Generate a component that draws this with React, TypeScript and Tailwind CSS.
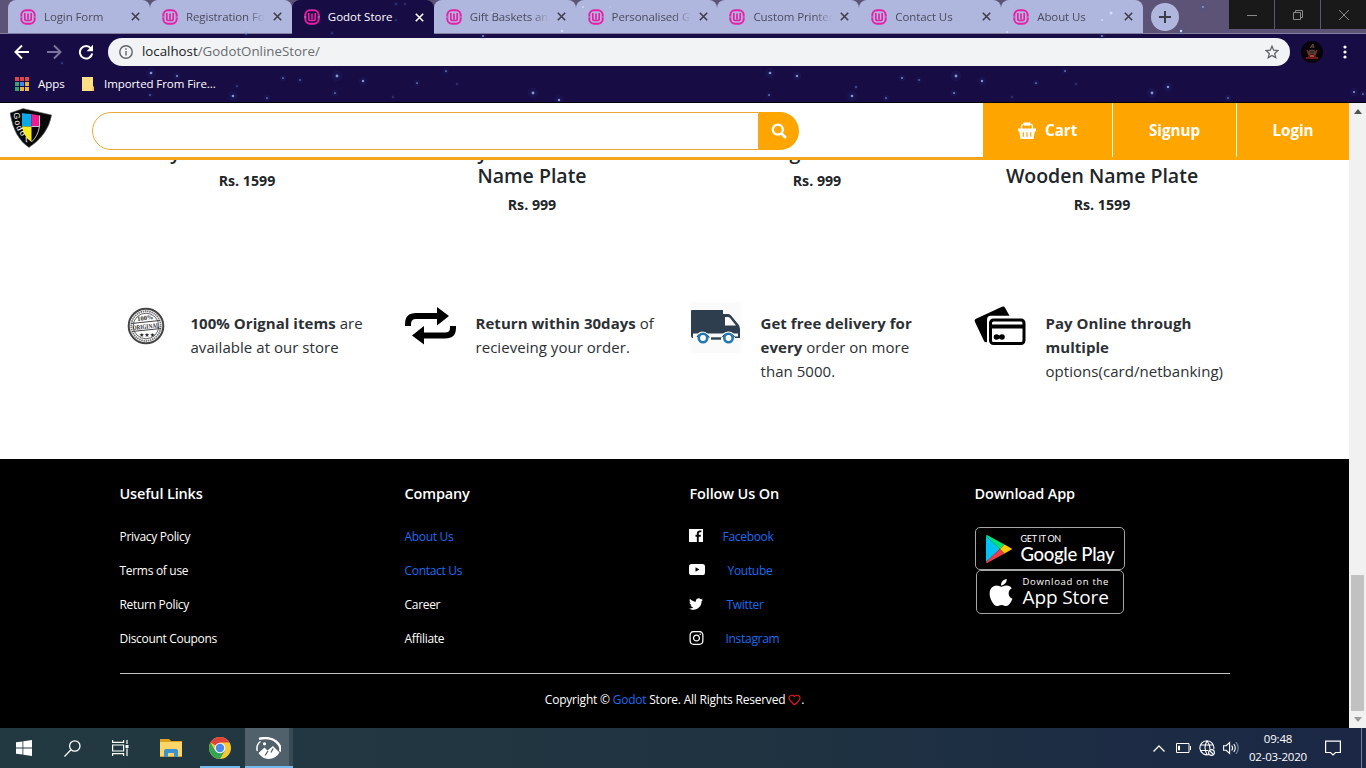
import React from "react";
import {
  FaApple,
  FaInstagram,
  FaRegHeart,
  FaTwitter,
} from "react-icons/fa";

const tabs = [
  { title: "Login Form" },
  { title: "Registration Form" },
  { title: "Godot Store", active: true },
  { title: "Gift Baskets and" },
  { title: "Personalised Gi" },
  { title: "Custom Printed" },
  { title: "Contact Us" },
  { title: "About Us" },
];

const stars: [number, number, number][] = [
  [151, 73, 1.6], [177, 76, 1.2], [150, 95, 0.9], [233, 96, 1.6], [267, 98, 1], [237, 86, 0.7],
  [283, 78, 1], [300, 80, 0.9], [337, 76, 1.7], [363, 81, 1.4], [335, 93, 1], [393, 97, 0.6],
  [417, 83, 1], [446, 71, 1], [457, 84, 0.6], [533, 93, 1.7], [559, 100, 1.5], [483, 36, 1.1],
  [770, 73, 1.6], [797, 76, 1.4], [769, 95, 1], [852, 96, 1.6], [856, 87, 0.8], [886, 98, 1],
  [902, 78, 1.1], [919, 80, 0.9], [956, 76, 1.7], [982, 81, 1.4], [954, 93, 1.1], [1012, 97, 0.6],
  [1036, 83, 1], [1065, 71, 1], [1076, 84, 0.6], [1152, 93, 1.7], [1168, 87, 1.5], [1228, 98, 1],
  [1354, 92, 1.3], [1363, 94, 1], [1102, 36, 1.1], [396, 4, 0.7], [332, 33, 0.7], [246, 34, 0.8],
  [62, 63, 0.7], [396, 20, 0.6], [405, 4, 0.6], [1203, 7, 1.1], [1181, 31, 1.4],
];

const glints: [number, number, number][] = [
  [562, 31, 1.3], [492, 13, 0.9], [583, 7, 0.9], [610, 7, 0.6], [1111, 13, 1.5], [1102, 20, 1], [1007, 32, 0.9], [1181, 31, 1.2],
];

function Favicon() {
  return (
    <svg className="h-4 w-4 shrink-0" viewBox="0 0 16 16" fill="none" stroke="#e61fa5">
      <rect x="1.3" y="1.3" width="13.4" height="13.4" rx="4.800" strokeWidth="2" />
      <path d="M4.800 4V9.700q0 1.800 1.800 1.800h2.800q1.800 0 1.800-1.800V4M8 4.500v6" strokeWidth="1.700" />
      <path d="M0 8h2.400M13.600 8H16" stroke="#b0b7df" strokeWidth=".7" />
    </svg>
  );
}

function Cross() {
  return (
    <svg className="h-[9px] w-[9px] shrink-0" viewBox="0 0 9 9" stroke="currentColor" strokeWidth="1.6">
      <path d="M.8.800l7.400 7.400M8.200.800L.800 8.200" />
    </svg>
  );
}

function TabStrip() {
  return (
    <div className="relative flex h-[34px] border-b border-[#85809f] bg-[#5c5377] pl-2">
      {tabs.map((t, i) => (
        <div
          key={t.title}
          className={
            t.active
              ? "relative -mb-px flex h-[34px] w-[141.900px] items-center rounded-t-lg bg-[#180c45] pl-3 text-white"
              : "relative flex h-[33px] w-[141.900px] items-center rounded-t-lg bg-[#b0b7df] pl-3 text-[#4a4b5c]"
          }
        >
          <Favicon />
          <div
            className={
              t.active
                ? "ml-2 w-[84px] overflow-hidden text-[11.500px] whitespace-nowrap"
                : "ml-2 w-[79px] overflow-hidden [mask-image:linear-gradient(to_right,black_78%,transparent)] text-[11.500px] tracking-[-0.1px] whitespace-nowrap"
            }
          >
            {t.title}
          </div>
          <div className={t.active ? "ml-[3px] flex text-white" : "ml-2 flex text-[#3e3e4c]"}>
            <Cross />
          </div>
          {!t.active && i !== 1 && i !== 7 && <div className="absolute top-2 -right-px h-[19px] w-px bg-[#6d6c8a]" />}
        </div>
      ))}
      <div className="mt-[3px] ml-2 flex h-7 w-7 items-center justify-center rounded-full bg-[#b0b7df]">
        <svg className="h-3 w-3" viewBox="0 0 12 12" stroke="#3d3d49" strokeWidth="2">
          <path d="M6 0v12M0 6h12" />
        </svg>
      </div>
      <div className="ml-auto flex h-[29px] gap-px">
        <div className="flex w-[45px] items-center justify-center bg-[#191919]">
          <svg className="h-2.5 w-2.5" viewBox="0 0 10 10" stroke="#8a8a8a"><path d="M0 5.500h10" /></svg>
        </div>
        <div className="flex w-[45px] items-center justify-center bg-[#191919]">
          <svg className="h-2.5 w-2.5" viewBox="0 0 10 10" stroke="#8a8a8a" fill="none">
            <path d="M.5 2.500h7v7h-7zM2.500 2.500v-2h7v7h-2" />
          </svg>
        </div>
        <div className="flex w-[45px] items-center justify-center bg-[#191919]">
          <svg className="h-2.5 w-2.5" viewBox="0 0 10 10" stroke="#8a8a8a"><path d="M0 0l10 10M10 0L0 10" /></svg>
        </div>
      </div>
    </div>
  );
}

function Toolbar() {
  return (
    <div className="flex h-[35px] items-center pl-[14px]">
      <svg className="h-4 w-4" viewBox="0 0 16 16" fill="none" stroke="#fff" strokeWidth="2">
        <path d="M15 8H2M8 1.500L1.500 8 8 14.500" />
      </svg>
      <svg className="ml-4 h-4 w-4" viewBox="0 0 16 16" fill="none" stroke="#7b759b" strokeWidth="2">
        <path d="M1 8h13M8 1.500L14.500 8 8 14.500" />
      </svg>
      <svg className="ml-4 h-4 w-4" viewBox="0 0 16 16" fill="none" stroke="#fff" strokeWidth="2">
        <path d="M13 4.500A6.200 6.200 0 1 0 14.200 9.500" />
        <path d="M15 .8v6.400H8.600z" fill="#fff" stroke="none" />
      </svg>
      <div className="ml-[14px] flex h-7 w-[1182px] items-center rounded-full bg-[#f1f3f4] pr-[11px] pl-[11px]">
        <svg className="h-[14px] w-[14px]" viewBox="0 0 14 14" fill="none" stroke="#5f6368" strokeWidth="1.400">
          <circle cx="7" cy="7" r="6.200" />
          <path d="M7 6v4.500M7 3.200v1.500" />
        </svg>
        <div className="mt-px ml-[9px] text-[13.300px] text-[#696c70]">
          <span className="text-[#202124]">localhost</span>/GodotOnlineStore/
        </div>
        <svg className="ml-auto h-[14px] w-[14px]" viewBox="0 0 14 14" fill="none" stroke="#5f6368" strokeWidth="1.300">
          <path d="M7 1.200l1.700 4 4.300.4-3.300 2.800 1 4.200L7 10.400l-3.700 2.200 1-4.200L1 5.600l4.300-.4z" />
        </svg>
      </div>
      <svg className="ml-[11px] h-[22px] w-[22px]" viewBox="0 0 22 22">
        <circle cx="11" cy="11" r="11" fill="#070308" />
        <path d="M5 17h12M6 9l2 5M16 9l-2 5M8 12v4M14 12v4" stroke="#8b281f" strokeWidth="1.300" />
        <path d="M9 7l3-4 1 4M8 10q3-2 6 0v3H8z" stroke="#745547" strokeWidth=".8" fill="#3b2b26" />
        <path d="M9 14h4v2H9z" fill="#b2442e" />
      </svg>
      <svg className="ml-5 h-4 w-1" viewBox="0 0 4 16" fill="#fff">
        <circle cx="2" cy="3" r="1.600" /><circle cx="2" cy="8" r="1.600" /><circle cx="2" cy="13" r="1.600" />
      </svg>
    </div>
  );
}

const appColors = ["#e0474c", "#d9434b", "#e0474c", "#36a373", "#4285f4", "#e8b33c", "#36a373", "#e8b33c", "#f0b93c"];

function Bookmarks() {
  return (
    <div className="flex h-8 items-center pb-[3px] pl-[15px] text-[11.500px] text-white">
      <div className="grid grid-cols-3 gap-px">
        {appColors.map((c, i) => (
          <div key={i} className="h-1 w-1" style={{ backgroundColor: c }} />
        ))}
      </div>
      <div className="ml-[9px] w-[44px]">Apps</div>
      <svg className="h-[14px] w-3" viewBox="0 0 12 14"><path d="M0 0h11v9l1 1v4H0z" fill="#fddf84" /><path d="M10 10h2v4h-2z" fill="#f0c65b" /></svg>
      <div className="ml-[10px] tracking-[-0.080px]">Imported From Fire...</div>
    </div>
  );
}

function Chrome() {
  return (
    <header className="relative h-[103px] border-b border-black bg-[#180c45]">
      <TabStrip />
      <Toolbar />
      <Bookmarks />
      <svg className="pointer-events-none absolute inset-0" width="1366" height="102" viewBox="0 0 1366 102">
        {stars.map(([x, y, r]) => (
          <g key={`${x}-${y}`}>
            <circle cx={x} cy={y} r={r * 3.2} fill="#2a5db5" opacity=".1" />
            <circle cx={x} cy={y} r={r * 0.85} fill="#a6b4ee" opacity=".8" />
          </g>
        ))}
        {glints.map(([x, y, r]) => (
          <circle key={`${x}-${y}`} cx={x} cy={y} r={r} fill="#dfe6ff" opacity=".8" />
        ))}
      </svg>
    </header>
  );
}

function Logo() {
  return (
    <svg className="h-10 w-[42px]" viewBox="0 0 42 40">
      <path d="M0 5L13 .5 41.700 7Q38 27 19 39.500 4 30 0 5z" fill="#080808" stroke="#777" strokeWidth=".6" />
      <path d="M12 5q4 1 9.500 1v12.500H12z" fill="#08a9e6" />
      <path d="M21.500 6q4 .800 8 1.500v11h-8z" fill="#ee1c8e" />
      <path d="M12 18.500h9.500V34Q13 28 12 18.500z" fill="#f8ec1c" />
      <path d="M29.500 7.500v11Q28 28 21.500 34M21.500 18.500h8" fill="none" stroke="#eee" strokeWidth=".8" />
      <g fill="#fff" fontFamily="Liberation Sans" fontSize="8.500">
        <text transform="translate(3.500 5) rotate(82)">G</text>
        <text transform="translate(4.500 13) rotate(78)">o</text>
        <text transform="translate(6 19) rotate(65)">d</text>
        <text transform="translate(9 25) rotate(50)">o</text>
        <text transform="translate(15 34) rotate(5)">t</text>
      </g>
    </svg>
  );
}

function Basket() {
  return (
    <svg className="h-[17px] w-[18px]" viewBox="0 0 18 17">
      <path d="M3.500 7V4.200q.3-1.700 2-2h7q1.700.3 2 2V7" fill="none" stroke="#fff" strokeWidth="1.300" />
      <path d="M5.800.5h6.400v3.200H5.800z" fill="#fff" />
      <path d="M0 6.500h18v2.800h-1.200L15.500 17h-13L1.200 9.300H0z" fill="#fff" />
      <path d="M5.300 10.300v4.500M9 10.300v4.500M12.700 10.300v4.500" stroke="#ffa500" strokeWidth="1.200" />
    </svg>
  );
}

function Navbar() {
  return (
    <nav className="relative flex h-[57px] border-b-[3px] border-[#f5a51c] bg-white">
      <div className="pt-[5px] pl-[10px]"><Logo /></div>
      <div className="mt-[9px] ml-10 flex h-[38px] w-[707px]">
        <div className="w-[667px] rounded-l-[19px] border border-[#eba834]" />
        <div className="flex w-10 items-center justify-center rounded-r-[19px] bg-[#ffa500] text-white">
          <svg className="h-4 w-4" viewBox="0 0 16 16" fill="none" stroke="#fff" strokeLinecap="round">
            <circle cx="6.800" cy="6.600" r="5" strokeWidth="2.400" />
            <path d="M10.700 10.700l3.300 3.300" strokeWidth="2.900" />
          </svg>
        </div>
      </div>
      <div className="-mb-[3px] ml-auto flex h-[57px] bg-[#ffa500] pb-[3px] text-[15.200px] font-bold text-white">
        <div className="flex w-[130px] items-center gap-[9px] border-r border-white/90 pl-[35px]"><Basket />Cart</div>
        <div className="flex w-[124px] items-center justify-center border-r border-white/90">Signup</div>
        <div className="flex w-[112px] items-center justify-center">Login</div>
      </div>
    </nav>
  );
}

function Products() {
  return (
    <section className="-mt-5 grid h-[161px] grid-cols-4 px-[104.500px] text-center text-[19.500px] leading-6 font-semibold text-[#212529]">
      <div>
        <div className="pr-[143px]">y</div>
        <div className="mt-[5px] text-[14.200px] font-bold">Rs. 1599</div>
      </div>
      <div>
        <div className="pr-[99px]">y</div>
        <div>Name Plate</div>
        <div className="mt-[5px] text-[14.200px] font-bold">Rs. 999</div>
      </div>
      <div>
        <div className="pr-[44px]">g</div>
        <div className="mt-[5px] text-[14.200px] font-bold">Rs. 999</div>
      </div>
      <div>
        <div className="h-6" />
        <div>Wooden Name Plate</div>
        <div className="mt-[5px] text-[14.200px] font-bold">Rs. 1599</div>
      </div>
    </section>
  );
}

function Stamp() {
  return (
    <svg className="mt-[6px] ml-[7px] h-[38px] w-[38px]" viewBox="0 0 38 38" fill="none" stroke="#444">
      <circle cx="19" cy="19" r="17.300" strokeWidth="2" />
      <circle cx="19" cy="19" r="14.800" strokeWidth="1.800" strokeDasharray="1.500 .700" stroke="#777" />
      <circle cx="19" cy="19" r="12.800" strokeWidth=".8" />
      <path d="M4 16.500l29-3M5 24.500l29-3" strokeWidth="1" />
      <g fill="#222" stroke="none" fontFamily="Liberation Serif" fontWeight="bold" textAnchor="middle">
        <text x="18.500" y="13" fontSize="6.500" transform="rotate(-7 19 13)">100%</text>
        <text x="19" y="21.700" fontSize="6.500" textLength="27" lengthAdjust="spacingAndGlyphs" transform="rotate(-6 19 20)">ORIGINAL</text>
        <text x="20" y="30" fontSize="6" fontFamily="DejaVu Sans">★★★</text>
      </g>
    </svg>
  );
}

function ReturnArrows() {
  return (
    <svg className="mt-[5px] h-10 w-[52px]" viewBox="0 0 52 40">
      <path d="M3 20v-2q0-8 8-8h23" fill="none" stroke="#000" strokeWidth="6" />
      <path d="M32 1l12 9-12 9.500zM19 20L7 29.500 19 38.500z" fill="#000" />
      <path d="M48 20v2q0 7.500-8 7.500H17" fill="none" stroke="#000" strokeWidth="6" />
    </svg>
  );
}

function Truck() {
  return (
    <svg className="mt-px h-[51px] w-[52px]" viewBox="0 0 52 51">
      <path d="M.5 0h51v51H.5z" fill="#fafafb" />
      <path d="M1 9q0-1 1-1h31v4h5q2 0 3 1.500l7 8.500q2 2 2 5v9h-5a6.500 6.500 0 0 0-13 0H19a6.500 6.500 0 0 0-13 0H3q-2 0-2-2z" fill="#2e3e4e" />
      <path d="M35 15h3q1 0 2 1l6 7.500H35z" fill="#fafafb" />
      <path d="M3 31.500h5q4-3 10 0h15q5-3.500 11 0h4v3h-3q-6-6-12-1-1 1-1.500 2.500H20q-5-6-12-2l-1 2H3z" fill="#fafafb" />
      <path d="M7 35q5-7 12 0M32.500 35q5-7 12 0" fill="none" stroke="#2e3e4e" strokeWidth="1.200" />
      <path d="M21 36.500h10" stroke="#2e3e4e" strokeWidth="2.400" />
      <circle cx="13" cy="36" r="4.200" fill="#fff" stroke="#2477b4" strokeWidth="2.600" />
      <circle cx="38.500" cy="36" r="4.200" fill="#fff" stroke="#2477b4" strokeWidth="2.600" />
    </svg>
  );
}

function Cards() {
  return (
    <svg className="mt-[5px] -ml-px h-10 w-[52px]" viewBox="0 0 52 40">
      <path d="M1.500 13L28 .8q2-.8 3 1l4.500 8H17q-4 0-4 4V36q-2 1-3-1L1 16q-1-2 .5-3z" fill="#000" />
      <rect x="16.500" y="14" width="33.500" height="23.500" rx="3" fill="#fff" stroke="#000" strokeWidth="3" />
      <path d="M16 18.500h34v4H16z" fill="#000" />
      <circle cx="22.500" cy="31" r="2.800" /><circle cx="28" cy="31" r="2.800" /><path d="M22 29.500h6v3h-6z" />
    </svg>
  );
}

function Feature({ icon, children }: { icon: React.ReactNode; children: React.ReactNode }) {
  return (
    <div className="flex pl-[15px]">
      <div className="w-[71px] shrink-0">{icon}</div>
      <p className="mt-[10px] text-[15px] leading-6 tracking-[0.04px] whitespace-nowrap text-[#2c3034]">{children}</p>
    </div>
  );
}

function Features() {
  return (
    <section className="grid h-[158px] grid-cols-4 px-[104.500px]">
      <Feature icon={<Stamp />}><b>100% Orignal items</b> are<br />available at our store</Feature>
      <Feature icon={<ReturnArrows />}><b>Return within 30days</b> of<br />recieveing your order.</Feature>
      <Feature icon={<Truck />}><b>Get free delivery for<br />every</b> order on more<br />than 5000.</Feature>
      <Feature icon={<Cards />}><b>Pay Online through<br />multiple</b><br />options(card/netbanking)</Feature>
    </section>
  );
}

function FooterColumn({ title, children }: { title: string; children: React.ReactNode }) {
  return (
    <div className="pl-[15px]">
      <h3 className="text-[14.500px] leading-6 font-semibold tracking-[-0.15px]">{title}</h3>
      {children}
    </div>
  );
}

function Links({ items }: { items: { text: string; blue?: boolean }[] }) {
  return (
    <ul className="mt-[14px]">
      {items.map((l) => (
        <li key={l.text} className={l.blue ? "h-[34px] leading-[34px] text-[#1c6bef]" : "h-[34px] leading-[34px]"}>{l.text}</li>
      ))}
    </ul>
  );
}

function PlayBadge() {
  return (
    <div className="flex h-[43px] w-[150px] items-center rounded-[5px] border border-[#a6a6a6] pl-[10px]">
      <svg className="h-7 w-[26px]" viewBox="0 0 26 28">
        <path d="M0 1v26l14-13z" fill="#00c3f5" />
        <path d="M0 1q.500-1.500 2-.500L18.500 9.500 14 14z" fill="#00e276" />
        <path d="M0 27q.500 1.500 2 .5L18.500 18.500 14 14z" fill="#f23b48" />
        <path d="M18.500 9.500L25.500 13.500q.800.500 0 1l-7 4L14 14z" fill="#ffca05" />
      </svg>
      <div className="ml-[9px] whitespace-nowrap text-white">
        <div className="font-[Lato] text-[9px] leading-[9px]">GET IT ON</div>
        <div className="mt-[1px] font-[Lato] text-[18.500px] leading-[20px] font-medium tracking-[-0.3px]">Google Play</div>
      </div>
    </div>
  );
}

function AppleBadge() {
  return (
    <div className="ml-px flex h-[44px] w-[148px] items-center rounded-[5px] border border-[#a6a6a6] pl-[11px]">
      <FaApple className="h-[31px] w-[26px]" />
      <div className="ml-[9px] whitespace-nowrap text-white">
        <div className="text-[9.500px] leading-[10px] tracking-[0.7px]">Download on the</div>
        <div className="text-[19px] leading-[21px] font-medium tracking-[-0.1px]">App Store</div>
      </div>
    </div>
  );
}

function Footer() {
  return (
    <footer className="h-[269px] bg-black pt-[23px] text-[12px] tracking-[-0.3px] text-white">
      <div className="grid h-[191px] grid-cols-4 px-[104.500px]">
        <FooterColumn title="Useful Links">
          <Links items={[{ text: "Privacy Policy" }, { text: "Terms of use" }, { text: "Return Policy" }, { text: "Discount Coupons" }]} />
        </FooterColumn>
        <FooterColumn title="Company">
          <Links items={[{ text: "About Us", blue: true }, { text: "Contact Us", blue: true }, { text: "Career" }, { text: "Affiliate" }]} />
        </FooterColumn>
        <FooterColumn title="Follow Us On">
          <ul className="mt-[14px] text-[#1c6bef]">
            <li className="flex h-[34px] items-center">
              <svg className="mb-[3px] -ml-px h-[13px] w-[14px]" viewBox="0 0 14 13">
                <path d="M0 0h14v13H0z" fill="#fff" />
                <path d="M8.800 13V4.600q0-2.200 2.400-2.200h1.200M6.500 6.800h5.300" fill="none" stroke="#000" strokeWidth="1.900" />
              </svg>
              <span className="ml-5">Facebook</span>
            </li>
            <li className="flex h-[34px] items-center">
              <svg className="mb-[3px] -ml-px h-[11px] w-4" viewBox="0 0 16 11">
                <rect width="16" height="11" rx="2.600" fill="#fff" /><path d="M6.500 3.200v4.600l4-2.300z" fill="#000" />
              </svg>
              <span className="ml-[23px]">Youtube</span>
            </li>
            <li className="flex h-[34px] items-center">
              <FaTwitter className="mb-[3px] -ml-px h-[14px] w-[14px] text-white" /><span className="ml-6">Twitter</span>
            </li>
            <li className="flex h-[34px] items-center">
              <FaInstagram className="mb-[3px] -ml-px h-4 w-[15px] text-white" /><span className="ml-[22px]">Instagram</span>
            </li>
          </ul>
        </FooterColumn>
        <FooterColumn title="Download App">
          <div className="mt-[21px]"><PlayBadge /><AppleBadge /></div>
        </FooterColumn>
      </div>
      <div className="mr-[119px] ml-[120px] h-px bg-[#c4c4c4]" />
      <p className="mt-[16px] flex h-5 items-center justify-center">
        <span className="tracking-[-0.22px]">Copyright © <span className="text-[#1c6bef]">Godot</span> Store. All Rights Reserved</span>
        <FaRegHeart className="ml-[3px] h-3 w-[13px] text-[#ed1518]" />.
      </p>
    </footer>
  );
}

function Scrollbar() {
  return (
    <div className="flex w-[17px] flex-col items-center bg-[#f1f1f1]">
      <svg className="mt-[6px] h-[5px] w-2" viewBox="0 0 8 5"><path d="M0 5l4-5 4 5z" fill="#505050" /></svg>
      <div className="mt-[461px] h-[136px] w-[13px] bg-[#c1c1c1]" />
      <svg className="mt-[6px] h-[5px] w-2" viewBox="0 0 8 5"><path d="M0 0l4 5 4-5z" fill="#9a9a9a" /></svg>
    </div>
  );
}

function Taskbar() {
  return (
    <div className="flex h-10 bg-linear-to-r from-[#233941] via-[#1f3440] to-[#1b2745] text-white">
      <div className="flex w-12 items-center justify-center">
        <svg className="h-4 w-4" viewBox="0 0 16 16" fill="#fff"><path d="M0 2.300l6.500-.9v6.200H0zM7.300 1.300L16 0v7.600H7.300zM0 8.400h6.500v6.200L0 13.700zM7.300 8.400H16V16l-8.700-1.300z" /></svg>
      </div>
      <div className="flex w-12 items-center justify-center">
        <svg className="h-[17px] w-[17px]" viewBox="0 0 17 17" fill="none" stroke="#fff" strokeWidth="1.300"><circle cx="10.800" cy="6" r="5.200" /><path d="M7 9.800L.5 16.500" /></svg>
      </div>
      <div className="flex w-12 items-center justify-center">
        <svg className="h-4 w-[17px]" viewBox="0 0 17 16" fill="none" stroke="#fff" strokeWidth="1.200"><path d="M.6 0v2.400h11V0M.6 16v-2.400h11V16M.6 5h11v6H.600zM15 0v4M15 8.500V16" /><path d="M13.500 5h3v3h-3z" fill="#fff" stroke="none" /></svg>
      </div>
      <div className="flex w-14 items-center justify-center pr-[2px]">
        <svg className="h-[18px] w-[22px]" viewBox="0 0 22 18"><path d="M0 0h9l2 2h11v16H0z" fill="#e0a21a" /><path d="M0 3h22v14H0z" fill="#fcd668" /><path d="M4 18v-6q0-2 2-2h10q2 0 2 2v6h-4v-4H8v4z" fill="#3b93d4" /></svg>
      </div>
      <div className="flex w-10 items-center justify-center border-b-2 border-[#76b9ed]">
        <svg className="mt-[2px] h-[22px] w-[22px]" viewBox="0 0 22 22">
          <circle cx="11" cy="11" r="11" fill="#f8c834" />
          <path d="M11 11L1.500 5.500A11 11 0 0 1 20.500 5.500H11z" fill="#e0433b" />
          <path d="M1.500 5.500A11 11 0 0 0 11 22L15.800 13.800 6.200 13.800z" fill="#35a453" />
          <circle cx="11" cy="11" r="5.300" fill="#f3f5f6" /><circle cx="11" cy="11" r="4.200" fill="#4a87ee" />
        </svg>
      </div>
      <div className="ml-[5px] flex w-12 border-b-2 border-[#76b9ed] bg-[#384a54]">
        <div className="flex w-[44px] items-center justify-center bg-[#50616b] pl-[3px]">
          <svg className="mt-[2px] h-[22px] w-[25px]" viewBox="0 0 25 22">
            <path d="M2.500 16L8.500 10.500l3 3L17 9l6.500 6.500Q20 22 12.500 22 5.500 21.500 2.500 16z" fill="#fff" />
            <path d="M3 1.800Q14-.5 20 4.500t4 10" fill="none" stroke="#fff" strokeWidth="2.400" />
            <path d="M1.300 14Q-.3 8 4.500 4.500" fill="none" stroke="#fff" strokeWidth="1.500" />
            <circle cx="8.500" cy="6.800" r="1.600" fill="#fff" />
            <path d="M12 14l-3 4.500M17 11.500l-2 4" stroke="#50616b" strokeWidth="1.300" />
          </svg>
        </div>
      </div>
      <div className="ml-auto flex items-center">
        <svg className="h-[7px] w-3" viewBox="0 0 12 7" fill="none" stroke="#fff" strokeWidth="1.300"><path d="M.5 6.500L6 1l5.500 5.500" /></svg>
        <svg className="ml-[11px] h-[10px] w-[15px]" viewBox="0 0 15 10" fill="none" stroke="#fff"><path d="M.5.500h12.500v9H.500zM14.500 3v4" /><path d="M2.500 3h1v4h-1z" fill="#fff" /></svg>
        <svg className="ml-2 h-4 w-4" viewBox="0 0 16 16" fill="none" stroke="#fff" strokeWidth="1.100">
          <path d="M10 14.500A7 7 0 1 1 14.800 9M1 5h13.500M1 10.500h8M8 1q-4 6.500 0 13.500M8 1q3.500 4 2.800 8" /><circle cx="12.500" cy="12.500" r="2.900" /><path d="M10.500 10.500l4 4" />
        </svg>
        <svg className="ml-2 h-[14px] w-4" viewBox="0 0 16 14" fill="none" stroke="#fff" strokeWidth="1.100"><path d="M.6 4.700h2.600L6.600 1.500v11L3.200 9.300H.6zM8.700 4.500q1.800 2.500 0 5M10.800 3q3 4 0 8" /><path d="M13 1.200q4.500 5.800 0 11.600" stroke="#7c869a" /></svg>
        <div className="ml-[9px] w-[60px] text-center text-[11.500px] leading-[18px] tracking-[-0.2px] whitespace-nowrap">
          <div>09:48</div><div>02-03-2020</div>
        </div>
        <svg className="ml-[17px] h-4 w-4" viewBox="0 0 16 16" fill="none" stroke="#fff" strokeWidth="1.200"><path d="M.6 1.200h14.800v11.300H10.500L8 15 5.500 12.500H.6z" /></svg>
        <div className="ml-5 h-10 w-px bg-[#727b90]" /><div className="w-1" />
      </div>
    </div>
  );
}

export default function App() {
  return (
    <div className="h-[768px] w-[1366px] overflow-hidden bg-white font-['Open_Sans',sans-serif]">
      <Chrome />
      <div className="flex h-[625px]">
        <main className="w-[1349px] overflow-hidden">
          <div className="relative z-10"><Navbar /></div>
          <Products />
          <Features />
          <Footer />
        </main>
        <Scrollbar />
      </div>
      <Taskbar />
    </div>
  );
}
